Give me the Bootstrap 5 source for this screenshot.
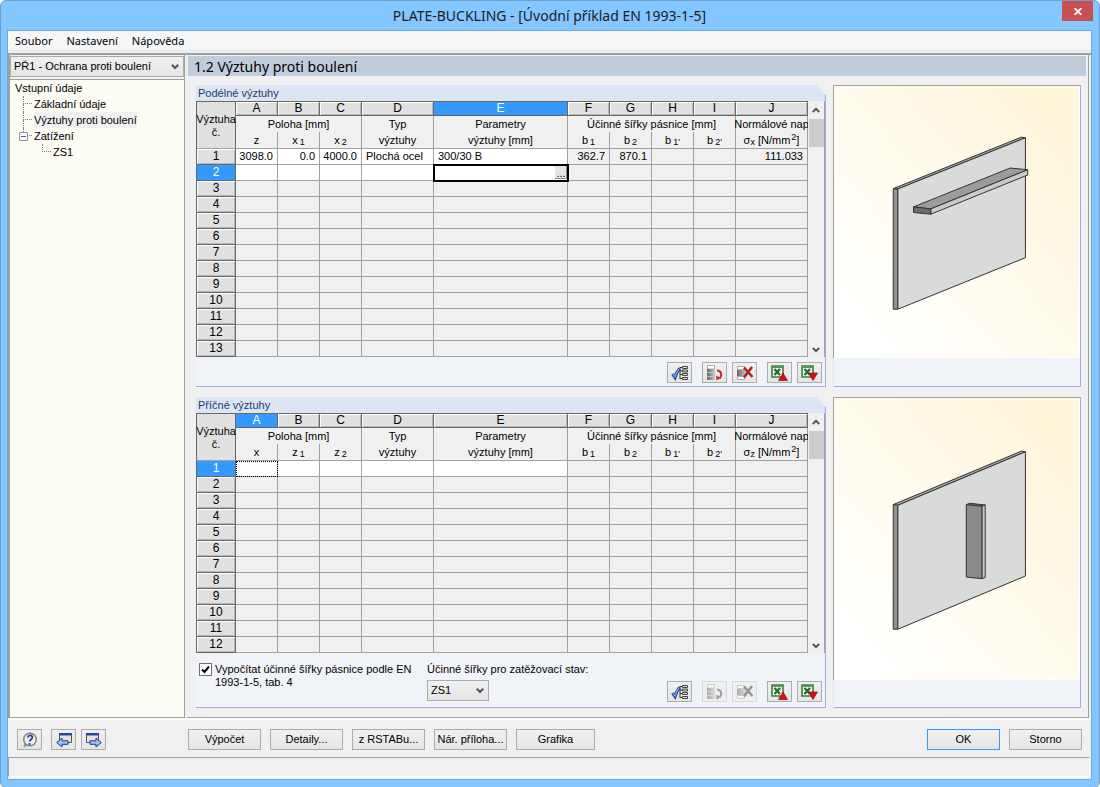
<!DOCTYPE html>
<html lang="cs">
<head>
<meta charset="utf-8">
<meta name="viewport" content="width=device-width, initial-scale=1">
<title>PLATE-BUCKLING</title>
<link href="https://cdn.jsdelivr.net/npm/bootstrap@5.3.0/dist/css/bootstrap.min.css" rel="stylesheet">
<style>
  body { font: 11px/16px "Liberation Sans", Arial, sans-serif; color: #000; background: #fff; }
  .app-window { min-height: 100vh; background: #84c6ff; border: 1px solid #6a9fce; border-radius: 6px; padding: 0 7px 7px 6px; }
  .title-bar { height: 29px; position: relative; font: 14px/30px "Noto Sans", sans-serif; color: #1c1c1c; }
  .close-btn { position: absolute; right: -1px; top: 0; width: 31px; height: 20px; background: #c75050; border: 0; padding: 0; display: flex; align-items: center; justify-content: center; }
  .client { background: #f0f0f0; border: 1px solid #6fa9dd; }
  .menu-bar { background: #f5f6f7; height: 20px; border-bottom: 1px solid #e6e6e6; padding: 0 7px; gap: 14px; font: 11px/20px "Noto Sans", sans-serif; }
  .menu-bar a { color: #000; text-decoration: none; }
  .work { border-top: 2px solid #a0a0a0; margin-top: 2px; gap: 2px; }
  .side { width: 177px; border-left: 2px solid #a0a0a0; border-right: 1px solid #a0a0a0; border-bottom: 1px solid #a0a0a0; }
  .win-select { appearance: none; display: block; color: #000; border: 1px solid #acacac; border-radius: 0; padding: 0 20px 0 3px; height: 21px; line-height: 19px;
    background: url("data:image/svg+xml,%3Csvg xmlns='http://www.w3.org/2000/svg' width='8' height='6'%3E%3Cpath d='M.8.8 4 4 7.200.8' fill='none' stroke='%23555' stroke-width='2'/%3E%3C/svg%3E") no-repeat right 4px center, linear-gradient(#f0f0f0, #e5e5e5); }
  .case-select { margin: 1px 0 2px; }
  .tree { background: #fcfcf4; border-top: 1px solid #a0a0a0; padding: 0 5px; }
  .tree ul { list-style: none; margin: 0; padding: 0; }
  .tree li { position: relative; }
  .tree .branch > li { padding-left: 19px; }
  .tree .branch > li::before { content: ""; position: absolute; left: 8px; top: 0; width: 9px; height: 8px; border-left: 1px dotted #808080; border-bottom: 1px dotted #808080; }
  .tree .branch > li:not(:last-child)::after { content: ""; position: absolute; left: 8px; top: 8px; bottom: 0; border-left: 1px dotted #808080; }
  .tree a { color: #000; text-decoration: none; }
  .tree a.current { background: #f0f0f0; display: inline-block; line-height: 16px; }
  .toggle { position: absolute; z-index: 1; left: 4px; top: 4px; width: 9px; height: 9px; padding: 0; border: 1px solid #919191; border-radius: 1px; background: linear-gradient(#46639c, #46639c) center / 5px 1px no-repeat #fff; }
  .main-pane { border: solid #a0a0a0; border-width: 0 1px 1px 0; margin-right: 2px; padding: 1px 2px 9px 1px; }
  .page-head { background: #bfccda; font: 14px/21px "Noto Sans", sans-serif; height: 20px; padding-left: 6px; margin: 0; }
  .section-row { gap: 7px; padding: 0 5px 0 8px; }
  .top-section { margin-top: 9px; }
  .low-section { margin-top: 10px; }
  .group { border-right: 1px solid #a6a6f0; border-bottom: 1px solid #a6a6f0; background: #f0f3f8; clip-path: polygon(0 0, calc(100% - 10px) 0, 100% 10px, 100% 100%, 0 100%); }
  .group-title { background: #dbe5f4; color: #1e3f66; font-size: 11px; line-height: 17px; height: 16px; margin: 0; padding-left: 2px; }
  .grid-wrap { border-right: 1px solid #a0a0a0; background: #f0f0f0; }
  .data-grid { border-collapse: separate; border-spacing: 0; table-layout: fixed; width: 100%; border-top: 1px solid #696969; border-left: 1px solid #696969; }
  .data-grid th, .data-grid td { font-weight: 400; padding: 0; height: 16px; line-height: 15px; border: solid #a0a0a0; border-width: 0 1px 1px 0; white-space: nowrap; overflow: hidden; text-align: center; background: #f0f0f0; }
  .data-grid .letters th { height: 14px; line-height: 13px; background: #e0e0e0; border-color: #696969; box-shadow: inset 1px 1px #fff, inset -1px -1px #b8b8b8; font-size: 12px; }
  .data-grid .letters th.corner { overflow: visible; box-shadow: none; font-size: 11px; padding-top: 2px; border-right-color: #696969; border-bottom-color: #a0a0a0; }
  .data-grid .top th { border-bottom: 0; line-height: 16px; overflow: visible; }
  .data-grid .bleed { display: block; margin: 0 -3px; }
  .data-grid .units th { height: 17px; line-height: 16px; }
  .data-grid .units sub, .data-grid .units sup { font-size: 9px; line-height: 0; margin-left: 2px; bottom: 0; top: 1px; }
  .data-grid .units sup { top: -4px; margin-left: 1px; }
  .data-grid .units sub.tight { margin-left: 0; }
  .data-grid tbody th { background: #e0e0e0; border-color: #696969; box-shadow: inset 1px 1px #fff, inset -1px -1px #b8b8b8; font-size: 12px; }
  .data-grid .letters th.picked, .data-grid tbody th.picked { background: #3399ff; color: #fff; box-shadow: none; }
  .data-grid td.open { background: #fff; }
  .data-grid td.num { text-align: right; padding-right: 4px; }
  .data-grid td.word { text-align: left; padding-left: 4px; }
  .data-grid td.focus-cell { outline: 1px dotted #000; outline-offset: -1px; }
  .data-grid td.edit-cell { outline: 2px solid #000; outline-offset: -1px; }
  .cell-edit { display: flex; height: 15px; padding: 1px 0; }
  .cell-edit input { flex: 1; min-width: 0; border: 0; padding: 0 3px; outline: 0; }
  .cell-edit button { width: 12px; padding: 0; border: 0; background: #e6e6e6; box-shadow: inset -1px -1px #8a8a8a; line-height: 8px; }
  .c-row { width: 39px; } .c-s { width: 42px; } .c-m { width: 72px; }
  .scroll-strip { width: 16px; padding: 6px 0 4px; background: #f0f0f0; }
  .scroll-thumb { width: 15px; height: 28px; background: #cdcdcd; margin-top: 6px; }
  .tools { padding: 5px 3px 3px; }
  .tool-btn, .cmd-btn { border: 1px solid #acacac; border-radius: 0; background: linear-gradient(#f0f0f0, #e5e5e5); color: #000; padding: 0; height: 21px; }
  .tool-btn { width: 25px; display: flex; align-items: center; justify-content: center; }
  .tool-btn:disabled { border-color: #d9d9d9; background: #efefef; }
  .tool-btn:disabled svg { filter: grayscale(1); opacity: .5; }
  .gap-near { margin-right: 5px; }
  .gap-far { margin-right: 10px; }
  .cmd-btn { width: 73px; line-height: 19px; }
  .cmd-btn.wide { width: 79px; }
  .cmd-btn.primary { border-color: #3399ff; }
  .tick { appearance: none; flex: none; width: 13px; height: 13px; border: 1px solid #707070; margin: 0;
    background: #fff url("data:image/svg+xml,%3Csvg xmlns='http://www.w3.org/2000/svg' width='11' height='11'%3E%3Cpath d='M2 5.500 4.500 8 9 2.500' fill='none' stroke='%23000' stroke-width='2'/%3E%3C/svg%3E") center no-repeat; }
  .options { padding: 10px 3px 5px; min-height: 54px; }
  .options label { line-height: 13px; display: block; }
  .option-tick { gap: 3px; width: 228px; }
  .tick-label { width: 200px; }
  .load-select { width: 62px; margin-top: 4px; }
  .picture { width: 248px; flex: none; border: 1px solid #a0a0a0; border-width: 1px 0 0 1px; position: relative; background: #f0f3f8; border-left-color: #dfe4f4; box-shadow: inset -1px -1px #a6a6f0; }
  .picture svg { display: block; width: 246px; border-right: 1px solid #fff; border-bottom: 1px solid #fff; background: linear-gradient(to top right, #fff 8%, #fffbec 52%, #fff6e3 70%, #fdf6d8 92%); box-shadow: -1px 0 #a0a0a0; }
  .pic-a { height: 272px; } .pic-b { height: 282px; }
  .command-bar { border-top: 2px solid #fff; padding: 9px 9px 7px; }
  .nav-tools { gap: 5px; width: 171px; }
  .nav-tools .tool-btn:first-child { margin-right: 4px; }
  .cmd-group { gap: 9px; }
  .status-bar { border: 1px solid #a0a0a0; border-right-color: #fff; border-bottom-color: #fff; height: 20px; margin: 0 1px 2px 0; }
</style>
</head>
<body>
<svg class="position-absolute" width="0" height="0" aria-hidden="true">
  <linearGradient id="bar"><stop stop-color="#666"/><stop offset="1" stop-color="#c8c8c8"/></linearGradient>
  <symbol id="i-check" viewBox="0 0 18 16"><path d="M9 2.500h2.500M9 6h2.500M9 9.500h2.500M9 13.500h2.500M9 2v12" fill="none" stroke="#333"/><path d="M11.500 1.500h5v2h-5zM11.500 5h5v2h-5zM11.500 8.500h5v2h-5zM11.500 12.500h5v2h-5z" fill="#ddd" stroke="#444"/><path d="M1.500 9 4 12.500C5 9 6.500 6 8.500 3.500" fill="none" stroke="#1e3a8a" stroke-width="3"/><path d="M1.800 9.200 4 12C5 9 6.500 6 8 4" fill="none" stroke="#7da7ee" stroke-width="1.300"/></symbol>
  <symbol id="i-rows" viewBox="0 0 18 16"><path d="M1.500.500h7v3.500h-7z" fill="#fff" stroke="#aaa"/><path d="M1 4h8v11H1z" fill="url(#bar)"/><path d="M1 7.500h8M1 11.500h8" stroke="#ccc" stroke-width=".8"/><path d="M11 5.500c4.500 0 5.500 5 2.500 8" fill="none" stroke="#c83030" stroke-width="2"/><path d="m10 10.500.5 5 4.500-2.500z" fill="#c83030"/></symbol>
  <symbol id="i-drop" viewBox="0 0 18 16"><path d="M1.500 1.500h7v3h-7zM1.500 11.500h7v3h-7z" fill="#fff" stroke="#aaa"/><path d="M1 5h9v6H1z" fill="url(#bar)"/><path d="m8 2.500 8.500 9.500M16 2 8 12.500" fill="none" stroke="#b02222" stroke-width="2.600"/></symbol>
  <symbol id="i-xl" viewBox="0 0 18 16"><path d="M1 1h11v11H1z" fill="#eef6ee" stroke="#3c7a3c" stroke-width="1.600"/><path d="M1 1h11v2H1z" fill="#4f9a4f"/><path d="m3.500 4 5.500 6M9 4l-5.500 6" stroke="#27702b" stroke-width="2.400"/></symbol>
</svg>

<div class="app-window d-flex flex-column">
  <header class="title-bar text-center">PLATE-BUCKLING - [Úvodní příklad EN 1993-1-5]
    <button class="close-btn" type="button" aria-label="Zavřít"><svg width="8" height="7" viewBox="0 0 8 7"><path d="m.5 0 7 7M7.500 0l-7 7" stroke="#fff" stroke-width="1.800"/></svg></button>
  </header>
  <div class="client flex-grow-1 d-flex flex-column">
    <nav class="menu-bar d-flex"><a href="#">Soubor</a><a href="#">Nastavení</a><a href="#">Nápověda</a></nav>

    <div class="work d-flex flex-grow-1">
      <aside class="side d-flex flex-column flex-shrink-0">
        <select class="win-select w-100 case-select" aria-label="Případ"><option>PŘ1 - Ochrana proti boulení</option></select>
        <nav class="tree flex-grow-1">
          <ul><li><a href="#">Vstupní údaje</a>
            <ul class="branch">
              <li><a href="#">Základní údaje</a></li>
              <li><a class="current" href="#">Výztuhy proti boulení</a></li>
              <li><button class="toggle" type="button" aria-label="Sbalit"></button><a href="#">Zatížení</a>
                <ul class="branch"><li><a href="#">ZS1</a></li></ul>
              </li>
            </ul></li></ul>
        </nav>
      </aside>

      <main class="main-pane flex-grow-1">
        <h1 class="page-head">1.2 Výztuhy proti boulení</h1>

        <div class="section-row d-flex top-section">
          <section class="group flex-grow-1 d-flex flex-column">
            <h2 class="group-title">Podélné výztuhy</h2>
            <div class="grid-wrap d-flex">
              <table class="data-grid" data-rows="13" data-axis="z,x,x" data-col="E" data-row="2"></table>
              <div class="scroll-strip d-flex flex-column align-items-center flex-shrink-0" aria-hidden="true">
                <svg width="8" height="6"><path d="M.8 5 4 1.800 7.200 5" fill="none" stroke="#555" stroke-width="2"/></svg>
                <div class="scroll-thumb"></div>
                <svg class="mt-auto" width="8" height="6"><path d="M.8 1 4 4.200 7.200 1" fill="none" stroke="#555" stroke-width="2"/></svg>
              </div>
            </div>
            <div class="tools d-flex justify-content-end" data-tools></div>
          </section>
          <figure class="picture m-0">
            <svg class="pic-a" viewBox="42 18 735 816" role="img" aria-label="Podélná výztuha">
              <g stroke="#333" stroke-width="3" stroke-linejoin="round">
                <path d="M219 327 605 172l12 2-384 154z" fill="#aaa"/>
                <path d="M219 327l14 2v361h-14z" fill="#909390"/>
                <path d="M233 328 617 174v361L233 690z" fill="#d9dbda"/>
                <path d="M280 382 571 265l53 5-292 118z" fill="#9b9d9b"/>
                <path d="M332 388 624 270v16L332 404z" fill="#c9cbca"/>
                <path d="M280 382l52 6v16l-52-5z" fill="#6b6b6b"/>
              </g>
            </svg>
          </figure>
        </div>

        <div class="section-row d-flex low-section">
          <section class="group flex-grow-1 d-flex flex-column">
            <h2 class="group-title">Příčné výztuhy</h2>
            <div class="grid-wrap d-flex">
              <table class="data-grid" data-rows="12" data-axis="x,z,z" data-col="A" data-row="1"></table>
              <div class="scroll-strip d-flex flex-column align-items-center flex-shrink-0" aria-hidden="true">
                <svg width="8" height="6"><path d="M.8 5 4 1.800 7.200 5" fill="none" stroke="#555" stroke-width="2"/></svg>
                <div class="scroll-thumb"></div>
                <svg class="mt-auto" width="8" height="6"><path d="M.8 1 4 4.200 7.200 1" fill="none" stroke="#555" stroke-width="2"/></svg>
              </div>
            </div>
            <div class="options d-flex">
              <div class="d-flex align-items-start option-tick">
                <input class="tick" type="checkbox" id="calc" checked>
                <label class="tick-label" for="calc">Vypočítat účinné šířky pásnice podle EN 1993-1-5, tab. 4</label>
              </div>
              <div class="option-load">
                <label for="load">Účinné šířky pro zatěžovací stav:</label>
                <select class="win-select load-select" id="load"><option>ZS1</option></select>
              </div>
              <div class="ms-auto align-self-end d-flex" data-tools="idle"></div>
            </div>
          </section>
          <figure class="picture m-0">
            <svg class="pic-b" viewBox="42 24 735 846" role="img" aria-label="Příčná výztuha">
              <g stroke="#333" stroke-width="3" stroke-linejoin="round">
                <path d="M219 345 605 184l12 2-384 161z" fill="#aaa"/>
                <path d="M219 345l14 2v373h-14z" fill="#909390"/>
                <path d="M233 347 617 186v374L233 720z" fill="#d9dbda"/>
                <path d="M439 345l10-4 47 5-10 4z" fill="#777"/>
                <path d="M486 350l10-4v218l-10 4z" fill="#c9cbca"/>
                <path d="M439 345l47 5v218l-47-5z" fill="#8a8a8a"/>
              </g>
            </svg>
          </figure>
        </div>
      </main>
    </div>

    <footer class="command-bar d-flex">
      <div class="d-flex nav-tools">
        <button class="tool-btn" type="button" aria-label="Nápověda"><svg width="16" height="16" viewBox="0 0 16 16"><path d="M3 11 2 15l4-2.500z" fill="#ddd" stroke="#888"/><circle cx="8" cy="7.500" r="6.300" fill="#e8eaf0" stroke="#808080" stroke-width="1.400"/><path d="M5.800 5.500C6.500 2.500 10.800 3 10.300 5.700 10 7.300 8 7.500 7.800 9.500" fill="none" stroke="#2b3f94" stroke-width="1.800"/><circle cx="7.500" cy="12" r="1.100" fill="#2b3f94"/></svg></button>
        <button class="tool-btn" type="button" aria-label="Předchozí"><svg width="16" height="16" viewBox="0 0 16 16"><path d="M3.500 1.500h12v9h-12z" fill="#e4e4e4" stroke="#555"/><path d="M3 1h13v2.500H3z" fill="#2b459c"/><path d="M.7 10.500 6 6v2.800h6v3.500H6V15z" fill="#9cc0f8" stroke="#1e3a8a"/></svg></button>
        <button class="tool-btn" type="button" aria-label="Další"><svg width="16" height="16" viewBox="0 0 16 16"><path d="M.5 1.500h12v9H.5z" fill="#e4e4e4" stroke="#555"/><path d="M0 1h13v2.500H0z" fill="#2b459c"/><path d="M15.300 10.500 10 6v2.800H4v3.500h6V15z" fill="#9cc0f8" stroke="#1e3a8a"/></svg></button>
      </div>
      <div class="d-flex cmd-group">
        <button class="cmd-btn" type="button">Výpočet</button>
        <button class="cmd-btn" type="button">Detaily...</button>
        <button class="cmd-btn" type="button">z RSTABu...</button>
        <button class="cmd-btn" type="button">Nár. příloha...</button>
        <button class="cmd-btn wide" type="button">Grafika</button>
      </div>
      <div class="d-flex cmd-group ms-auto">
        <button class="cmd-btn primary" type="button">OK</button>
        <button class="cmd-btn" type="button">Storno</button>
      </div>
    </footer>
    <div class="status-bar"></div>
  </div>
</div>
<script>
  const letters = [..."ABCDEFGHIJ"];
  const filled = { A: "3098.0", B: "0.0", C: "4000.0", D: "Plochá ocel", E: "300/30 B", F: "362.7", G: "870.1", J: "111.033" };

  document.querySelectorAll(".data-grid").forEach(grid => {
    const { rows, axis, col, row } = grid.dataset;
    const [a, b, c] = axis.split(",");
    const active = col === "E";
    const sign = active ? "x" : "z";
    let html = `<colgroup><col class="c-row"><col class="c-s"><col class="c-s"><col class="c-s"><col class="c-m"><col>
      <col class="c-s"><col class="c-s"><col class="c-s"><col class="c-s"><col class="c-m"></colgroup>
      <thead><tr class="letters"><th class="corner" rowspan="3"><span class="bleed">Výztuha<br>č.</span></th>` +
      letters.map(l => `<th class="${l === col ? "picked" : ""}">${l}</th>`).join("") +
      `</tr><tr class="top"><th colspan="3">Poloha [mm]</th><th>Typ</th><th>Parametry</th><th colspan="4">Účinné šířky pásnice [mm]</th><th><span class="bleed">Normálové nap</span></th></tr>
      <tr class="units"><th>${a}</th><th>${b}<sub>1</sub></th><th>${c}<sub>2</sub></th><th>výztuhy</th><th>výztuhy [mm]</th>
      <th>b<sub>1</sub></th><th>b<sub>2</sub></th><th>b<sub>1'</sub></th><th>b<sub>2'</sub></th><th>σ<sub class="tight">${sign}</sub> [N/mm<sup>2</sup>]</th></tr></thead><tbody>`;
    for (let r = 1; r <= +rows; r++) {
      html += `<tr><th class="${r === +row ? "picked" : ""}">${r}</th>`;
      for (const l of letters) {
        const cls = [];
        if (l <= "E" && r <= (active ? 2 : 1)) cls.push("open");
        cls.push(l === "D" || l === "E" ? "word" : "num");
        let text = active && r === 1 ? filled[l] || "" : "";
        if (l === col && r === +row) {
          cls.push(active ? "edit-cell p-0" : "focus-cell");
          if (active) text = `<div class="cell-edit"><input type="text" aria-label="Parametry výztuhy"><button type="button">...</button></div>`;
        }
        html += `<td class="${cls.join(" ")}">${text}</td>`;
      }
      html += "</tr>";
    }
    grid.innerHTML = html + "</tbody>";
  });

  const icon = (id, extra = "") => `<svg width="18" height="16" viewBox="0 0 18 16"><use href="#${id}"/>${extra}</svg>`;
  document.querySelectorAll("[data-tools]").forEach(bar => {
    const off = bar.dataset.tools === "idle" ? "disabled" : "";
    const list = [
      ["Vybrat", icon("i-check"), "", "gap-far"],
      ["Vyjmout řádek", icon("i-rows"), off, "gap-near"],
      ["Smazat řádek", icon("i-drop"), off, "gap-far"],
      ["Export", icon("i-xl", '<path d="m12 8 4.500 7.500h-9z" fill="#d41010" stroke="#8b0000" stroke-width=".6"/>'), "", "gap-near"],
      ["Import", icon("i-xl", '<path d="M12 15.500 16.500 8h-9z" fill="#d41010" stroke="#8b0000" stroke-width=".6"/>'), "", ""]
    ];
    bar.innerHTML = list.map(([name, svg, dis, gap]) =>
      `<button class="tool-btn ${gap}" type="button" aria-label="${name}" ${dis}>${svg}</button>`).join("");
  });
</script>
</body>
</html>
